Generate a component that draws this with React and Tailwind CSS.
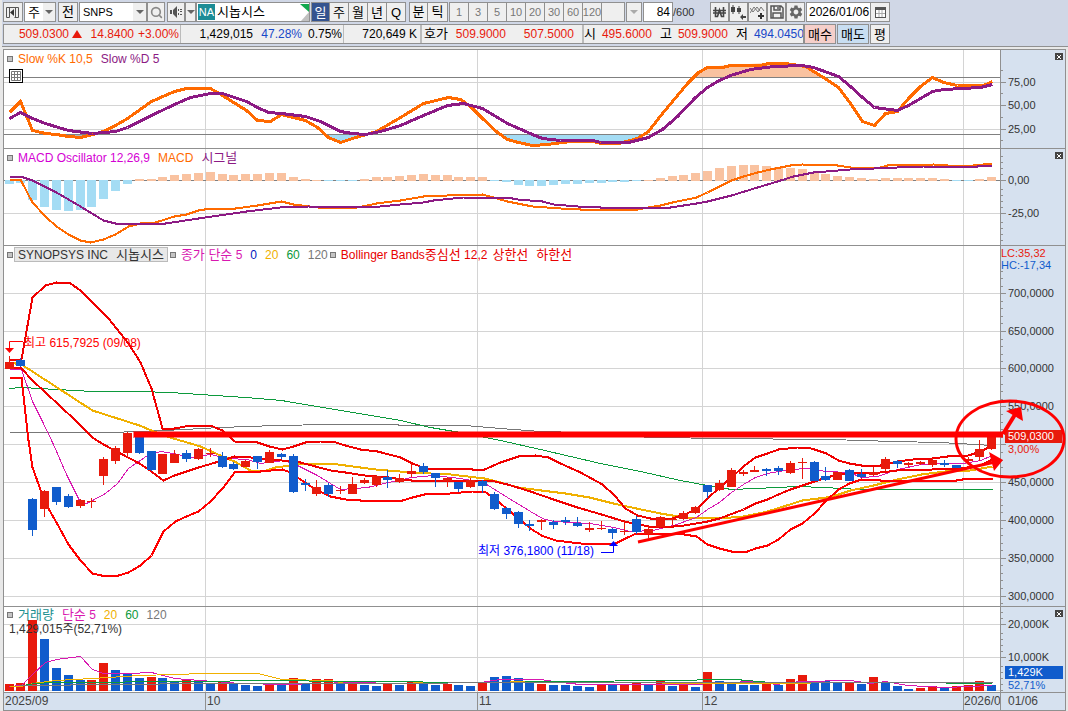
import React, { useState } from 'react';
import { Search } from 'lucide-react';
import { MdSettings } from 'react-icons/md';

const RED = '#e81a0c';
const BLUE = '#105ccc';
const STEP = 11.84;
const barX = (i) => Math.round(9.5 + i * STEP);

// [colour, high, top, bottom, low]
const candles = [
  ['r', 356, 362, 369, 369], ['b', 358, 360, 366, 367], ['b', 498, 499, 530, 536], ['r', 490, 491, 509, 517],
  ['b', 487, 487, 502, 505], ['b', 494, 496, 507, 508], ['r', 499, 500, 506, 508], ['r', 498, 501, 502, 508],
  ['r', 457, 459, 476, 485], ['r', 446, 448, 461, 464], ['r', 432, 433, 453, 458], ['b', 437, 437, 453, 454],
  ['b', 451, 451, 470, 471], ['r', 454, 454, 474, 474], ['r', 450, 454, 463, 463], ['b', 450, 453, 459, 462],
  ['r', 448, 449, 459, 460], ['r', 448, 453, 454, 457], ['b', 452, 456, 467, 468], ['b', 462, 464, 469, 470],
  ['r', 460, 461, 467, 467], ['b', 456, 456, 462, 469], ['r', 450, 452, 463, 463], ['b', 453, 454, 457, 459],
  ['b', 454, 456, 492, 493], ['b', 479, 483, 485, 491], ['r', 480, 487, 494, 496], ['b', 483, 485, 494, 497],
  ['r', 486, 490, 491, 494], ['r', 477, 484, 494, 494], ['r', 478, 480, 483, 484], ['r', 475, 476, 485, 487],
  ['b', 470, 477, 480, 488], ['r', 474, 478, 482, 483], ['r', 463, 471, 474, 477], ['b', 463, 466, 472, 474],
  ['b', 473, 473, 478, 487], ['r', 477, 478, 481, 487], ['b', 482, 482, 489, 492], ['r', 478, 480, 487, 488],
  ['b', 480, 481, 486, 493], ['b', 492, 494, 509, 510], ['b', 507, 508, 514, 519], ['b', 511, 512, 524, 528],
  ['b', 520, 524, 526, 531], ['r', 519, 520, 522, 530], ['b', 520, 522, 525, 529], ['b', 517, 520, 522, 525],
  ['b', 517, 523, 526, 527], ['r', 522, 528, 530, 532], ['r', 521, 528, 529, 530], ['b', 528, 529, 533, 539],
  ['r', 520, 531, 532, 535], ['b', 516, 519, 532, 534], ['r', 525, 529, 534, 538], ['r', 516, 517, 527, 528],
  ['r', 517, 519, 520, 525], ['r', 511, 513, 519, 520], ['r', 506, 507, 513, 514], ['b', 485, 485, 492, 498],
  ['r', 480, 483, 490, 491], ['r', 468, 470, 487, 487], ['r', 470, 472, 474, 476], ['r', 466, 470, 472, 472],
  ['b', 468, 469, 471, 476], ['b', 466, 468, 471, 475], ['r', 461, 463, 473, 474], ['r', 458, 462, 463, 479],
  ['b', 461, 462, 481, 481], ['b', 467, 476, 480, 481], ['r', 472, 472, 480, 480], ['b', 469, 470, 481, 481],
  ['b', 469, 474, 477, 478], ['r', 467, 472, 475, 476], ['r', 457, 459, 469, 471], ['b', 460, 461, 464, 468],
  ['r', 462, 463, 465, 467], ['r', 461, 462, 464, 465], ['r', 458, 460, 465, 467], ['b', 460, 463, 465, 467],
  ['b', 465, 465, 468, 468], ['r', 457, 459, 461, 464], ['r', 440, 449, 457, 461], ['r', 435, 436, 449, 450],
];

const oscillator = [
  -4, -3, -20, -27, -30, -31, -30, -27, -19, -11, -4, 2, 2, 4, 6, 7, 8, 9, 7, 6, 7, 7, 8, 8, 4, 2, 1, -1,
  -1, -1, 2, 4, 4, 5, 6, 7, 6, 6, 4, 4, 4, -1, -2, -5, -6, -6, -5, -4, -4, -3, -3, -2, -2, -1, 1, 3, 5, 6, 8,
  10, 13, 15, 16, 16, 15, 14, 13, 12, 9, 7, 5, 4, 3, 2, 3, 3, 3, 3, 3, 2, -1, -1, 2, 4,
];

const volumeTops = [
  684, 683, 620, 639, 668, 675, 680, 680, 663, 670, 674, 678, 677, 678, 681, 679, 681, 683, 681, 683, 685,
  686, 685, 685, 678, 683, 679, 679, 683, 683, 685, 686, 683, 685, 682, 684, 685, 684, 685, 686, 683, 677,
  676, 678, 683, 684, 685, 685, 686, 687, 684, 685, 684, 682, 684, 681, 686, 685, 687, 672, 681, 683, 685,
  685, 683, 685, 679, 675, 681, 681, 683, 683, 684, 677, 683, 686, 689, 688, 686, 688, 686, 685, 681, 685,
];
const volumeColours =
  'rrrbbbbrrbbbrbbrbbrbbbrbrbrrbrbbrbrbbrbbrbbbbrbbbbrbrrbrbrbrbbbbrbrrbbbrbrbbbrrbrrrb';

const lines = {
  slowK:
    '9,112 20,101 32,130 45,133 56,134 68,136 80,137 92,134 103,131 115,125 127,118 151,101 174,91 186,88 210,88 222,95 246,110 257,120 270,121 281,114 305,120 317,127 328,137 340,142 352,138 376,131 400,117 423,103 448,97 460,99 470,106 482,118 497,132 507,139 518,142 532,145 547,144 570,141 593,141 600,143 618,143 637,138 648,131 662,113 677,95 687,83 698,72 707,67 722,67 730,65 760,65 768,63 785,63 805,66 823,77 838,87 850,103 862,121 874,125 885,113 897,111 908,98 920,86 932,77 943,82 957,85 983,85 992,81',
  slowD:
    '9,118 20,112 32,118 45,123 68,130 92,133 115,131 127,127 151,115 174,104 190,97 210,93 222,93 246,101 257,107 268,112 281,113 305,116 320,121 340,131 352,133 365,134 380,131 400,125 423,115 447,105 463,103 482,108 507,123 532,134 542,138 560,140 593,140 600,142 628,142 648,137 662,129 677,116 695,97 707,87 717,81 730,75 750,69 773,66 802,65 813,67 838,76 850,86 862,97 874,107 897,110 908,105 932,91 943,89 980,87 992,84',
  macd:
    '9,179 20,179 32,202 45,216 56,226 68,234 80,240 90,242 103,239 115,234 128,226 140,223 155,222 174,216 186,214 198,210 210,208 235,208 257,205 281,201 293,204 317,207 352,208 376,203 400,200 423,196 447,195 482,194 493,197 507,201 532,206 560,208 580,209 637,209 648,207 660,205 672,202 696,197 707,192 719,186 731,180 743,176 757,172 770,169 790,165 802,164 837,165 850,167 880,167 887,165 933,164 947,165 973,165 992,163',
  signal:
    '9,176 20,176 32,180 56,192 80,206 103,220 115,223 165,223 198,218 246,211 280,207 308,206 370,207 400,204 423,202 433,200 463,197 507,197 517,199 542,201 553,204 577,206 600,207 670,207 696,203 707,201 731,195 757,187 777,181 793,176 813,172 850,169 897,167 923,166 977,166 992,165',
  bandUpper:
    '9,359 21,359 32,297 45,285 56,282 70,283 80,290 108,318 128,343 140,362 151,388 162,428 174,428 190,425 210,425 222,430 234,441 257,442 269,446 282,449 293,446 305,442 320,441 332,441 345,445 360,449 377,451 400,457 412,463 425,468 452,468 472,469 484,469 500,462 518,456 535,455 548,457 560,463 580,472 602,484 614,495 625,508 637,515 650,518 672,518 684,514 696,509 707,498 719,487 731,477 743,466 755,457 767,453 778,449 797,447 807,447 814,449 826,453 838,460 849,463 861,465 880,465 897,461 913,459 932,458 947,456 968,455 980,451 992,445',
  bandMid:
    '9,367 21,368 32,380 45,392 60,406 75,420 92,437 103,444 139,463 151,471 163,480 174,475 186,471 198,467 222,460 234,456 250,457 281,460 300,462 330,470 345,472 364,475 388,477 411,480 473,480 490,480 507,484 530,491 553,499 577,507 601,514 624,521 648,526 673,526 684,525 707,521 719,518 743,509 755,503 767,499 778,494 790,489 802,485 814,481 826,477 838,474 849,473 880,472 897,470 932,469 960,468 980,465 992,459',
  bandLower:
    '9,377 21,377 28,440 32,467 45,503 56,522 68,544 80,560 92,573 101,575 118,575 128,572 140,565 151,555 163,531 175,521 186,516 198,511 210,501 222,488 235,471 260,471 282,469 290,472 300,479 315,489 330,496 345,499 360,500 402,500 412,497 424,494 450,493 472,491 484,491 494,498 506,508 518,518 530,528 541,535 555,540 580,543 613,544 625,538 636,533 672,533 684,534 696,536 707,544 719,548 731,551 747,551 755,548 767,545 778,539 790,529 802,523 814,513 826,500 838,489 849,483 861,479 880,480 956,480 968,478 992,478',
  ma20:
    '9,362 21,364 35,373 92,410 139,425 163,435 200,446 222,456 234,461 250,470 262,471 275,467 290,465 305,463 330,463 345,465 375,469 411,472 450,474 484,478 500,482 518,487 541,490 565,493 589,497 613,503 636,508 660,513 684,517 719,518 743,516 767,511 802,500 826,497 838,494 850,490 873,485 897,479 921,474 945,471 970,470 992,466',
  ma60:
    '9,388 21,387 92,391 139,391 170,392 245,397 281,400 340,410 370,415 400,420 430,427 460,432 500,440 540,449 570,456 600,463 640,471 680,480 707,485 731,489 755,488 797,486 823,487 860,489 992,489',
  ma120: '9,432 110,432 165,430 220,427 275,425 330,424 465,425 500,428 540,431 580,432 620,436 713,438 830,439 893,441 940,442 992,445',
  ma5: '9,369 21,369 32,401 42,421 53,444 66,474 80,502 86,503 92,500 105,493 117,483 128,468 147,455 160,451 173,453 190,457 210,454 227,458 247,459 260,463 283,460 297,465 317,475 330,483 340,489 367,487 388,482 411,477 433,475 460,478 483,482 507,497 530,511 542,518 553,521 589,523 613,527 630,531 653,530 673,525 696,517 707,509 719,502 731,492 743,484 755,477 767,473 790,469 807,468 826,471 849,472 861,477 877,476 897,469 921,464 947,463 963,463 980,460 992,455',
  vol5: '9,686 21,685 32,674 45,662 56,659 80,656 92,669 103,673 128,673 151,672 174,678 200,680 240,683 285,684 350,682 400,683 480,682 500,679 540,679 560,682 580,684 660,684 697,684 720,682 760,681 775,684 800,681 850,680 870,683 885,681 907,685 945,687 968,686 992,685',
  vol20: '9,686 21,686 32,683 56,680 92,678 140,675 205,673 258,673 281,679 330,680 345,683 480,682 540,681 700,683 810,683',
  vol60: '26,684 50,682 100,682 150,681 210,681 250,680 480,682 660,680 735,679 770,682 900,682 992,683',
  vol120: '20,685 120,684 200,683 700,682 992,682',
};

const months = [205, 477, 702, 963];

const Line = ({ points, color, width = 1 }) => (
  <polyline points={points} fill="none" stroke={color} strokeWidth={width} shapeRendering="crispEdges" transform="translate(.5 .5)" />
);

const HLine = ({ y, color = '#d4d4d4' }) => <rect x="4" y={y} width="996" height="1" fill={color} />;

const Grid = ({ rows, top, height }) => (
  <g shapeRendering="crispEdges">
    {rows.map((y) => <HLine key={y} y={y} />)}
    {months.map((x) => <rect key={x} x={x} y={top} width="1" height={height} fill="#d4d4d4" />)}
  </g>
);

const Axis = ({ top, height, labels, minor, children }) => (
  <svg viewBox={`1001 ${top} 64 ${height}`} preserveAspectRatio="none" className="block h-full w-[64px] shrink-0 bg-[#d6e1ef] text-[11px]">
    <g fill="#909090" shapeRendering="crispEdges">
      {minor.map((y) => <rect key={y} x="1001" y={y} width="2" height="1" />)}
      {labels.map(([y]) => <rect key={y} x="1001" y={y} width="5" height="1" />)}
    </g>
    {labels.filter(([, label]) => label).map(([y, label]) => (
      <text key={y} x="1008" y={y + 4} fill="#333">{label}</text>
    ))}
    {children}
  </svg>
);

const CloseButton = () => (
  <button type="button" aria-label="Close panel" className="absolute top-[3px] right-[2px] flex h-[7px] w-[8px] items-center justify-center bg-[#444]">
    <svg viewBox="0 0 4 4" className="size-[4px]"><path d="M0 0L4 4M4 0L0 4" stroke="#fff" strokeWidth="1" /></svg>
  </button>
);

const Panel = ({ className, top, height, plot, axis, legend, closable, overlay }) => (
  <section className={`relative flex border-t border-[#909090] ${className}`}>
    <svg viewBox={`4 ${top} 996 ${height}`} preserveAspectRatio="none" className="block h-full min-w-0 flex-1 border-r border-[#909090] bg-white">
      {plot}
    </svg>
    {axis}
    <div className="absolute top-0 left-[3px]">{legend}</div>
    {closable && <CloseButton />}
    {overlay}
  </section>
);

const Marker = () => <span className="size-[6px] shrink-0 border border-[#777] bg-[#c4c4c4]" />;

const Arrow = ({ muted }) => (
  <span className={`h-0 w-0 border-x-[4px] border-t-[4px] border-x-transparent ${muted ? 'border-t-[#aaa]' : 'border-t-[#666]'}`} />
);

const btn = 'flex h-[20px] shrink-0 items-center justify-center overflow-hidden border border-[#909090] bg-[#efefef] whitespace-nowrap';

const IconButton = ({ label, className, children }) => (
  <button type="button" aria-label={label} className={`${btn} ${className}`}>{children}</button>
);

const periods = ['일', '주', '월', '년', 'Q'];
const minutes = ['1', '3', '5', '10', '20', '30', '60', '120'];

const Toolbar = () => {
  const [period, setPeriod] = useState('일');
  return (
    <div className="flex h-[20px] items-center text-[13px]">
      <IconButton label="Layout" className="w-[20px]">
        <svg className="shrink-0" width="14" height="12" viewBox="0 0 14 12" fill="none" stroke="#555">
          <path d="M.5 1.500h12v10H8.500M.5 1.500v10h3v-10M9.500 2v9" />
          <path d="M8 3v7L4 6.500z" fill="#333" stroke="none" />
        </svg>
      </IconButton>
      <div className="relative ml-px flex">
        <select aria-label="Category" className="h-[20px] w-[32px] appearance-none border border-[#909090] bg-white pl-[3px]">
          <option>주</option>
        </select>
        <span className="pointer-events-none absolute top-px right-px flex h-[18px] w-[12px] items-center justify-center bg-[#efefef]"><Arrow /></span>
      </div>
      <IconButton label="전" className="ml-[2px] w-[20px]">전</IconButton>
      <div className="relative ml-px flex">
        <input aria-label="Symbol" defaultValue="SNPS" className="h-[20px] w-[68px] border border-[#909090] bg-white pl-[3px] text-[11px] outline-none" />
        <span className="pointer-events-none absolute top-px right-px flex h-[18px] w-[13px] items-center justify-center bg-[#efefef]"><Arrow /></span>
      </div>
      <IconButton label="Search" className="w-[18px]"><Search size={13} strokeWidth={3} color="#888" className="shrink-0" /></IconButton>
      <IconButton label="Sound" className="ml-[2px] w-[18px]">
        <svg className="shrink-0" width="13" height="12" viewBox="0 0 13 12" fill="#555">
          <path d="M0 4h2v4H0zM3 4l4-4v12L3 8zM8 3h1v2H8zM8 7h1v2H8zM10 3h2v1h-2zM10 5h2v1h-2zM10 8h2v1h-2z" />
        </svg>
      </IconButton>
      <IconButton label="Sound options" className="w-[11px]"><Arrow /></IconButton>
      <div className="relative flex h-[20px] w-[114px] items-center border border-[#909090] bg-white pl-px">
        <span className="flex h-[16px] w-[17px] items-center justify-center bg-[#1c8c96] text-[11px] text-white">NA</span>
        <span className="ml-[2px]">시놉시스</span>
        <svg className="absolute top-0 right-0" width="9" height="18" viewBox="0 0 9 18">
          <path d="M0 1h9v8z" fill="#12a84e" />
          <path d="M9 9v9H1z" fill="#c0c0c0" />
        </svg>
      </div>
      <div className="ml-px flex">
        {periods.map((p) => (
          <button
            key={p}
            type="button"
            onClick={() => setPeriod(p)}
            className={p === period ? 'h-[20px] w-[19px] border border-[#909090] bg-[#34538f] text-white' : 'h-[20px] w-[19px] border border-l-0 border-[#909090] bg-[#efefef]'}
          >
            {p}
          </button>
        ))}
      </div>
      <div className="ml-[3px] flex">
        <button type="button" className={`${btn} w-[19px]`}>분</button>
        <button type="button" className={`${btn} w-[20px] border-l-0`}>틱</button>
      </div>
      <div className="ml-px flex text-[11px] text-[#777]">
        {minutes.map((m) => <button key={m} type="button" className={`${btn} w-[19px] border-r-0`}>{m}</button>)}
        <IconButton label="Custom interval" className="w-[24px]" />
      </div>
      <IconButton label="Intervals" className="ml-px w-[16px]"><Arrow muted /></IconButton>
      <input aria-label="Bars shown" defaultValue="84" className="ml-px h-[20px] w-[30px] border border-[#909090] bg-white pr-[2px] text-right text-[12px] outline-none" />
      <span className="w-[37px] text-[11px] text-[#333]">/600</span>
      <IconButton label="Won" className="w-[19px]">
        <svg className="shrink-0" width="13" height="12" viewBox="0 0 13 12" fill="none" stroke="#444" strokeWidth="1.600">
          <path d="M2.500 1v9.500h2L6.500 4l2 6.500h2V1M0 4.500h13M0 7h13" />
        </svg>
      </IconButton>
      <IconButton label="Candle style" className="w-[19px]">
        <svg className="shrink-0" width="15" height="16" viewBox="0 0 15 16" fill="#444">
          <path d="M0 3h4v5H0zM1.500 1h1v9h-1zM6 4h4v4H6zM7.500 2h1v8h-1zM9 13l3-3v2h3v2h-3v2z" />
        </svg>
      </IconButton>
      <IconButton label="Add indicator" className="w-[19px]">
        <svg className="shrink-0" width="15" height="16" viewBox="0 0 15 16" fill="none" stroke="#777">
          <path d="M0 9l4-6 4 5 3-5 3 4M0 4l3 4 4-5 3 4" />
          <path d="M11 9v6M8 12h6" stroke="#333" strokeWidth="2" />
        </svg>
      </IconButton>
      <IconButton label="Save" className="w-[19px]">
        <svg className="shrink-0" width="14" height="14" viewBox="0 0 14 14" fill="none" stroke="#555" strokeWidth="1.500"><path d="M1 1h10l2 2v10H1zM4 1v4h6V1M3 13V8h8v5M8 2v2" /></svg>
      </IconButton>
      <IconButton label="Settings" className="w-[19px]"><MdSettings size={16} color="#666" className="shrink-0" /></IconButton>
      <div className="ml-px flex">
        <input aria-label="Date" defaultValue="2026/01/06" className="h-[20px] w-[65px] border border-[#909090] bg-white pl-[2px] text-[12px] outline-none" />
        <IconButton label="Calendar" className="w-[19px] border-l-0">
          <svg className="shrink-0" width="11" height="11" viewBox="0 0 11 11"><path d="M0 0h11v11H0z" fill="#555" /><path d="M1 3h9v7H1z" fill="#fff" /><path d="M4 3v7M7 3v7M1 6.500h9" stroke="#aaa" /></svg>
        </IconButton>
      </div>
    </div>
  );
};

const Quotes = () => (
  <div className="mt-[2px] flex h-[20px] text-[12px] whitespace-nowrap">
    <div className="flex w-[801px] overflow-hidden border border-[#909090] bg-[#efefef] leading-[18px] *:shrink-0">
      <div className="flex w-[177px] justify-end border-r border-[#bbb] pr-px text-[#e81a0c]">
        <span>509.0300</span>
        <span className="mx-[3px] self-center border-x-[5px] border-b-[8px] border-x-transparent border-b-[#e81a0c]" />
        <span className="w-[49px] text-right">14.8400</span>
        <span className="w-[45px] text-right">+3.00%</span>
      </div>
      <div className="flex w-[163px] justify-end border-r border-[#bbb] pr-px">
        <span>1,429,015</span>
        <span className="w-[49px] text-right text-[#1848c8]">47.28%</span>
        <span className="w-[40px] text-right">0.75%</span>
      </div>
      <div className="w-[78px] border-r-2 border-[#bbb] pr-[3px] text-right">720,649 K</div>
      <div className="flex w-[162px] border-r-2 border-[#bbb] pl-[2px] text-[#e81a0c]">
        <span className="text-[13px] text-black">호가</span>
        <span className="w-[58px] text-right">509.9000</span>
        <span className="w-[68px] text-right">507.5000</span>
      </div>
      <div className="flex text-[#e81a0c]">
        <span className="text-[13px] text-black">시</span>
        <span className="w-[56px] text-right">495.6000</span>
        <span className="ml-[8px] text-[13px] text-black">고</span>
        <span className="w-[56px] text-right">509.9000</span>
        <span className="ml-[8px] text-[13px] text-black">저</span>
        <span className="ml-[6px] text-[#1848c8]">494.0450</span>
      </div>
    </div>
    <button type="button" className="w-[32px] border border-[#909090] bg-[#f5cfca] text-[13px]">매수</button>
    <button type="button" className="ml-px w-[32px] border border-[#909090] bg-[#c8def2] text-[13px]">매도</button>
    <button type="button" className="ml-px w-[20px] border border-[#909090] bg-[#efefef] text-[13px]">평</button>
  </div>
);

const StochasticPanel = () => (
  <Panel
    className="h-[99px]"
    top={50}
    height={98}
    closable
    plot={
      <>
        <Grid rows={[82, 105, 129]} top={50} height={98} />
        <polygon points="692,77 698,72 707,67 730,65 768,63 785,63 805,66 823,77" fill="#f9c2a0" />
        <polygon points="325,134 328,137 340,142 352,138 366,134" fill="#a4dcf4" />
        <polygon points="56,134 80,138 96,134" fill="#b0b8bc" />
        <polygon points="499,134 507,139 518,142 532,145 547,144 570,141 600,143 618,143 637,138 644,134" fill="#a4dcf4" />
        <HLine y={77} color="#808080" />
        <HLine y={134} color="#808080" />
        <Line points={lines.slowK} color="#ff6a00" width={3} />
        <Line points={lines.slowD} color="#8c1a84" width={3} />
      </>
    }
    axis={<Axis top={50} height={98} minor={[70, 93, 117, 140]} labels={[[82, '75,00'], [105, '50,00'], [129, '25,00']]} />}
    legend={
      <>
        <div className="flex h-[17px] items-center text-[12px] whitespace-nowrap">
          <Marker />
          <span className="ml-[5px] text-[#ff6a00]">Slow %K 10,5</span>
          <span className="ml-[8px] text-[#8c1a84]">Slow %D 5</span>
        </div>
        <button type="button" aria-label="Data table" className="mt-[2px] ml-[2px] block size-[14px] border border-black bg-white">
          <svg viewBox="0 0 12 12" className="size-full" fill="none" stroke="#777"><path d="M1.500 1.500h9v9h-9zM4.500 1v10M7.500 1v10M1 4.500h10M1 7.500h10" /></svg>
        </button>
      </>
    }
  />
);

const MacdPanel = () => (
  <Panel
    className="h-[97px]"
    top={149}
    height={96}
    closable
    plot={
      <>
        <Grid rows={[213]} top={149} height={96} />
        <HLine y={180} color="#808080" />
        <g shapeRendering="crispEdges">
          {oscillator.map((v, i) => (
            <rect key={i} x={barX(i) - 5} y={v > 0 ? 181 - v : 180} width="9" height={Math.abs(v)} fill={v > 0 ? '#f9c2a0' : '#a4dcf4'} />
          ))}
        </g>
        <Line points={lines.macd} color="#ff6a00" width={2} />
        <Line points={lines.signal} color="#8c1a84" width={2} />
      </>
    }
    axis={
      <Axis
        top={149}
        height={96}
        minor={[156, 162, 168, 174, 189, 195, 201, 207, 222, 228, 234, 240]}
        labels={[[180, '0,00'], [213, '-25,00']]}
      />
    }
    legend={
      <div className="flex h-[17px] items-center text-[12px] whitespace-nowrap">
        <Marker />
        <span className="ml-[5px] text-[#d400d4]">MACD Oscillator 12,26,9</span>
        <span className="ml-[8px] text-[#ff6a00]">MACD</span>
        <span className="ml-[8px] text-[13px] text-[#8c1a84]">시그널</span>
      </div>
    }
  />
);

const priceLabels = [
  [293, '700,0000'], [331, '650,0000'], [368, '600,0000'], [406, '550,0000'], [444, ''],
  [482, '450,0000'], [520, '400,0000'], [558, '350,0000'], [596, '300,0000'],
];
const priceMinor = Array.from({ length: 45 }, (_, i) => Math.round(270.5 + i * 7.56)).filter(
  (y) => !priceLabels.some(([l]) => Math.abs(l - y) < 3)
);

const PricePanel = () => (
  <Panel
    className="min-h-[300px] flex-1"
    top={246}
    height={360}
    plot={
      <>
        <Grid rows={priceLabels.map(([y]) => y)} top={246} height={360} />
        <Line points={lines.ma120} color="#777" />
        <Line points={lines.ma60} color="#0c9a3c" />
        <Line points={lines.ma20} color="#f0b000" width={2} />
        <Line points={lines.ma5} color="#d818b0" />
        <Line points={lines.bandUpper} color="#f00000" width={2} />
        <Line points={lines.bandMid} color="#f00000" width={2} />
        <Line points={lines.bandLower} color="#ff0000" width={2} />
        <g shapeRendering="crispEdges">
          {candles.map(([c, high, top, bottom, low], i) => (
            <g key={i} fill={c === 'r' ? RED : BLUE}>
              <rect x={barX(i) - 1} y={high} width="1" height={low - high} />
              <rect x={barX(i) - 5} y={top} width="9" height={bottom - top} />
            </g>
          ))}
        </g>
        <g className="text-[12px]">
          <path d="M23 341.500H9.500V348" fill="none" stroke="#f00" />
          <path d="M5 348h9l-4.500 5z" fill="#f00" />
          <text x="24" y="347" fill="#f00">최고 615,7925 (09/08)</text>
          <path d="M601 552.500H613.500V546" fill="none" stroke="#00f" />
          <path d="M609 546h9l-4.500-5z" fill="#00f" />
          <text x="478" y="555" fill="#00f">최저 376,1800 (11/18)</text>
        </g>
      </>
    }
    axis={
      <Axis top={246} height={360} minor={priceMinor} labels={priceLabels}>
        <text x="1001" y="257" fill={RED}>LC:35,32</text>
        <text x="1001" y="269" fill={BLUE}>HC:-17,34</text>
        <rect x="1005" y="430" width="57" height="13" fill={RED} />
        <text x="1008" y="440" fill="#fff">509,0300</text>
        <text x="1008" y="453" fill={RED}>3,00%</text>
      </Axis>
    }
    legend={
      <div className="flex h-[17px] items-center text-[12px] whitespace-nowrap">
        <Marker />
        <span className="ml-px flex h-[15px] items-center gap-[8px] border border-[#bbb] bg-[#e8e8e8] px-[3px] text-[#333]">
          <span>SYNOPSYS INC</span>
          <span className="text-[13px]">시놉시스</span>
        </span>
        <span className="ml-[2px] flex items-center gap-[5px]">
          <Marker />
          <span className="flex items-center gap-[8px]">
            <span className="text-[#d818b0]"><span className="text-[13px]">종가 단순</span> 5</span>
            <span className="text-[#0018c0]">0</span>
            <span className="text-[#f0b000]">20</span>
            <span className="text-[#0c9a3c]">60</span>
            <span className="text-[#777]">120</span>
          </span>
        </span>
        <span className="ml-[2px] flex items-center text-[#e80000]">
          <Marker />
          <span className="ml-[5px]">Bollinger Bands<span className="text-[13px]">중심선</span> 12,2</span>
          <span className="ml-[5px] text-[13px]">상한선</span>
          <span className="ml-[8px] text-[13px]">하한선</span>
        </span>
      </div>
    }
    overlay={
      <svg viewBox="4 246 1061 360" preserveAspectRatio="none" className="pointer-events-none absolute inset-0 size-full overflow-visible">
        <g fill="none" stroke="#f00">
          <path d="M133 434.500H1003" strokeWidth="7" opacity=".5" />
          <path d="M134 434.500H1003" strokeWidth="5" />
          <path d="M638 542L995 462" strokeWidth="3" />
          <path d="M1003 434L1016 413" strokeWidth="4" />
          <ellipse cx="1010" cy="439" rx="54" ry="38" strokeWidth="3" />
        </g>
        <path d="M989 452L1003 460 994 471zM1006 411L1021 407 1023 421z" fill="#f00" />
      </svg>
    }
  />
);

const VolumePanel = () => (
  <Panel
    className="h-[86px]"
    top={607}
    height={85}
    closable
    plot={
      <>
        <Grid rows={[624, 657, 690]} top={607} height={85} />
        <g shapeRendering="crispEdges">
          {volumeTops.map((y, i) => (
            <rect key={i} x={barX(i) - 5} y={y} width="9" height={691 - y} fill={volumeColours[i] === 'r' ? RED : BLUE} />
          ))}
        </g>
        <Line points={lines.vol5} color="#d818b0" />
        <Line points={lines.vol20} color="#f0b000" />
        <Line points={lines.vol60} color="#0c9a3c" />
        <Line points={lines.vol120} color="#777" />
      </>
    }
    axis={
      <Axis
        top={607}
        height={85}
        minor={[612, 618, 633, 639, 645, 651, 666, 672, 678, 684, 690]}
        labels={[[624, '20,000K'], [657, '10,000K']]}
      >
        <rect x="1005" y="666" width="58" height="13" fill={BLUE} />
        <text x="1008" y="676" fill="#fff">1,429K</text>
        <text x="1008" y="689" fill={BLUE}>52,71%</text>
      </Axis>
    }
    legend={
      <div className="text-[12px] whitespace-nowrap">
        <div className="flex h-[16px] items-center gap-[8px]">
          <span className="flex items-center gap-[5px] text-[13px] text-[#209090]"><Marker />거래량</span>
          <span className="text-[#d818b0]"><span className="text-[13px]">단순</span> 5</span>
          <span className="text-[#f0b000]">20</span>
          <span className="text-[#0c9a3c]">60</span>
          <span className="text-[#777]">120</span>
        </div>
        <div className="pl-[2px] leading-[13px] text-[#333]">1,429,015주(52,71%)</div>
      </div>
    }
  />
);

export default function App() {
  return (
    <div className="flex h-screen flex-col overflow-hidden bg-[#e8e8e8] font-['Liberation_Sans','Noto_Sans_CJK_KR',sans-serif] text-black">
      <header className="ml-[2px] h-[47px] shrink-0 border-b border-[#909090] bg-[#d0d7e6] pt-[2px] pl-px">
        <Toolbar />
        <Quotes />
      </header>
      <main className="mt-[2px] mr-[2px] ml-[3px] flex min-h-0 flex-1 flex-col border-x border-b border-[#909090]">
        <StochasticPanel />
        <MacdPanel />
        <PricePanel />
        <VolumePanel />
        <footer className="flex h-[18px] shrink-0 border-t border-[#909090] bg-[#d6e1ef] text-[12px] leading-[16px] text-[#444]">
          <div className="grid min-w-0 flex-1 grid-cols-[201fr_272fr_225fr_261fr_37fr] border-r border-[#909090] whitespace-nowrap *:overflow-hidden">
            <span className="pl-px">2025/09</span>
            <span className="border-l border-[#909090] pl-px">10</span>
            <span className="border-l border-[#909090] pl-px">11</span>
            <span className="border-l border-[#909090] pl-px">12</span>
            <span className="border-l border-[#909090]">2026/01</span>
          </div>
          <span className="w-[64px] pl-[7px]">01/06</span>
        </footer>
      </main>
    </div>
  );
}
